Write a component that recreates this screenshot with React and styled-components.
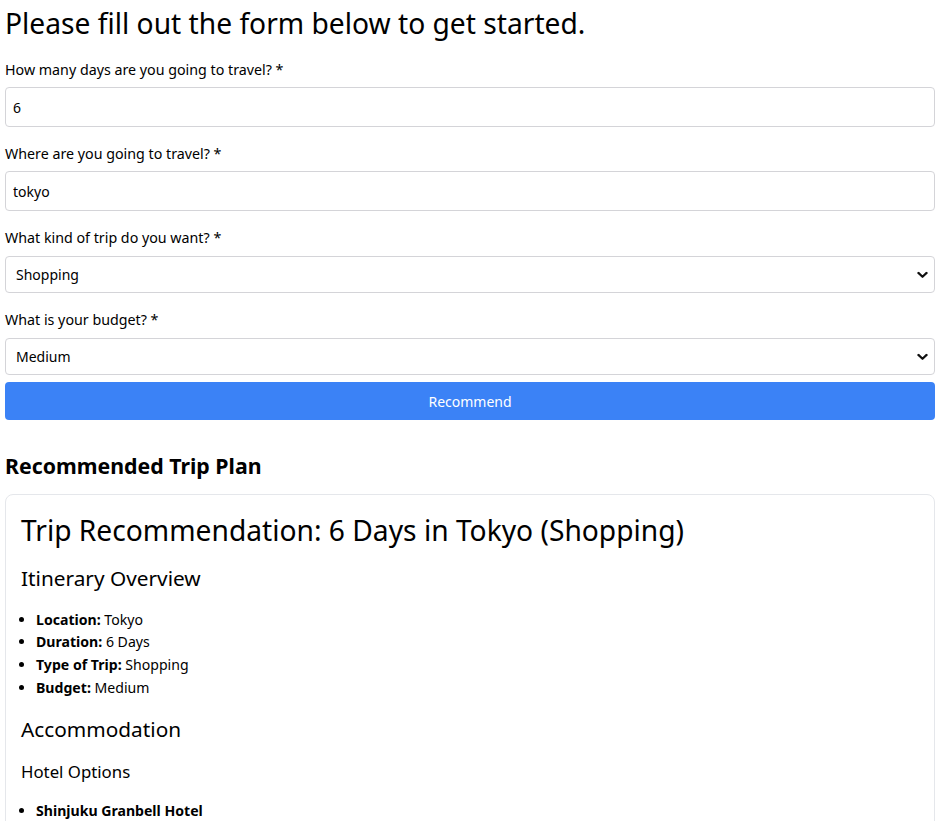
import styled, { createGlobalStyle } from "styled-components";

const GlobalStyle = createGlobalStyle`
  body {
    margin: 0;
    background: #fff;
    color: #000;
    font-family: "Noto Sans", "Open Sans", sans-serif;
  }
  * {
    box-sizing: border-box;
  }
`;

const overview = [
  { label: "Location:", value: "Tokyo" },
  { label: "Duration:", value: "6 Days" },
  { label: "Type of Trip:", value: "Shopping" },
  { label: "Budget:", value: "Medium" },
];

const Chevron = () => (
  <svg width="11" height="7" viewBox="0 0 11 7" fill="none">
    <path
      d="M1.4 1.4 5.5 5.3 9.6 1.4"
      stroke="#111"
      strokeWidth="2.2"
      strokeLinecap="round"
      strokeLinejoin="round"
    />
  </svg>
);

const SelectField = ({ value, options }) => (
  <SelectWrap>
    <Select defaultValue={value}>
      {options.map((o) => (
        <option key={o}>{o}</option>
      ))}
    </Select>
    <ChevronBox>
      <Chevron />
    </ChevronBox>
  </SelectWrap>
);

const App = () => {
  return (
    <Page>
      <GlobalStyle />
      <Title>Please fill out the form below to get started.</Title>
      <Form onSubmit={(e) => e.preventDefault()}>
        <Field>
          <Label>How many days are you going to travel? *</Label>
          <Input type="text" defaultValue="6" />
        </Field>
        <Field>
          <Label>Where are you going to travel? *</Label>
          <Input type="text" defaultValue="tokyo" />
        </Field>
        <Field>
          <Label $select>What kind of trip do you want? *</Label>
          <SelectField
            value="Shopping"
            options={["Sightseeing", "Shopping", "Food", "Adventure", "Relaxation"]}
          />
        </Field>
        <Field>
          <Label $select>What is your budget? *</Label>
          <SelectField value="Medium" options={["Low", "Medium", "High"]} />
        </Field>
        <Button type="submit">Recommend</Button>
      </Form>

      <PlanHeading>Recommended Trip Plan</PlanHeading>
      <Card>
        <CardTitle>Trip Recommendation: 6 Days in Tokyo (Shopping)</CardTitle>
        <Section>Itinerary Overview</Section>
        <List>
          {overview.map((item) => (
            <li key={item.label}>
              <strong>{item.label}</strong> {item.value}
            </li>
          ))}
        </List>
        <Section $gap={17}>Accommodation</Section>
        <SubSection>Hotel Options</SubSection>
        <List>
          <li>
            <strong>Shinjuku Granbell Hotel</strong>
          </li>
          <li>
            <strong>Hotel Gracery Shinjuku</strong>
          </li>
        </List>
      </Card>
    </Page>
  );
};

const Page = styled.div`
  padding: 0 6px 24px 5px;
`;

const Title = styled.h1`
  margin: 0 0 14px;
  font-size: 28.2px;
  font-weight: 400;
  line-height: 46px;
`;

const Form = styled.form`
  display: flex;
  flex-direction: column;
`;

const Field = styled.div`
  & + & {
    margin-top: 17px;
  }
`;

const Label = styled.label`
  display: block;
  font-size: 14.25px;
  line-height: 20px;
  margin-bottom: ${(p) => (p.$select ? "8px" : "7px")};
`;

const Input = styled.input`
  display: block;
  width: 100%;
  height: 40px;
  padding: 0 7px;
  border: 1px solid #d4d4d8;
  border-radius: 4px;
  font-family: inherit;
  font-size: 14px;
  color: #000;
  outline: none;
`;

const SelectWrap = styled.div`
  position: relative;
`;

const Select = styled.select`
  display: block;
  width: 100%;
  height: 37px;
  padding: 0 32px 0 10px;
  border: 1px solid #d4d4d8;
  border-radius: 4px;
  background: #fff;
  font-family: inherit;
  font-size: 14px;
  color: #000;
  appearance: none;
  outline: none;
`;

const ChevronBox = styled.span`
  position: absolute;
  right: 7px;
  top: 50%;
  transform: translateY(-50%);
  display: flex;
  pointer-events: none;
`;

const Button = styled.button`
  margin-top: 7px;
  height: 38px;
  width: 100%;
  border: none;
  border-radius: 4px;
  background: #3b82f6;
  color: #fff;
  font-family: inherit;
  font-size: 14px;
  cursor: pointer;
`;

const PlanHeading = styled.h2`
  margin: 32px 0 14px;
  font-size: 21.3px;
  font-weight: 700;
  line-height: 28px;
`;

const Card = styled.div`
  border: 1px solid #e5e7eb;
  border-radius: 8px;
  padding: 19px 15px 17px;
`;

const CardTitle = styled.h1`
  margin: 0 0 17px;
  font-size: 28.2px;
  font-weight: 400;
  line-height: 1.2;
`;

const Section = styled.h2`
  margin: ${(p) => p.$gap ?? 16}px 0 17px;
  font-size: 20.8px;
  font-weight: 400;
  line-height: 1.3;
`;

const SubSection = styled.h3`
  margin: 18px 0 17px;
  font-size: 16.8px;
  font-weight: 400;
  line-height: 1.3;
`;

const List = styled.ul`
  margin: 0;
  padding-left: 15px;
  font-size: 14.1px;
  line-height: 22.6px;
  strong {
    font-weight: 700;
  }
`;

export default App;
